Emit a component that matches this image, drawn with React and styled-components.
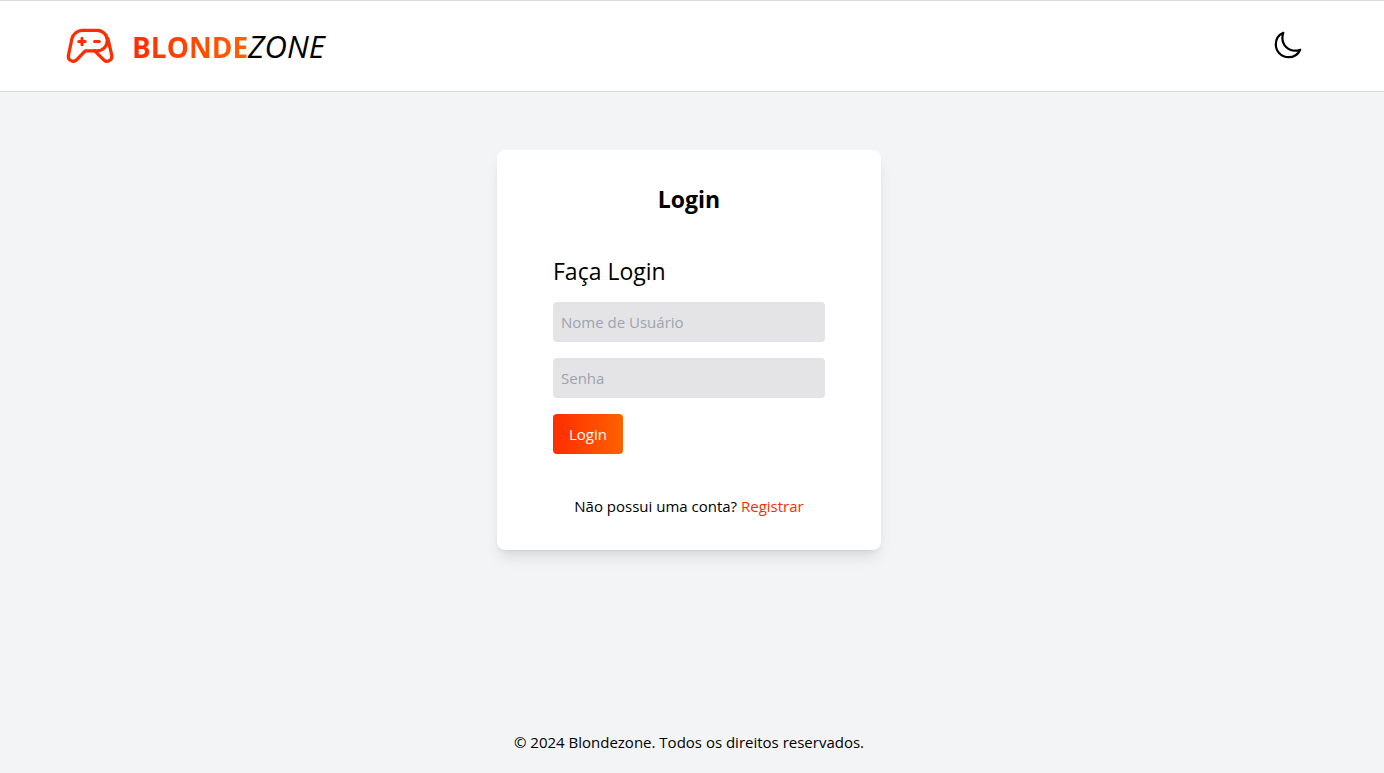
import React from "react";
import styled, { createGlobalStyle } from "styled-components";

const GlobalStyle = createGlobalStyle`
  *, *::before, *::after { box-sizing: border-box; }
  body {
    margin: 0;
    background: #f3f4f6;
    color: #000;
    font-family: "Segoe UI", "Open Sans", "Noto Sans", sans-serif;
    font-size: 15px;
    line-height: 24px;
  }
  h1, h2, p { margin: 0; }
  input, button { font: inherit; border: 0; }
`;

const Page = styled.div`
  display: flex;
  flex-direction: column;
  min-height: 100vh;
`;

const Header = styled.header`
  display: flex;
  align-items: center;
  justify-content: space-between;
  padding: 19px 70px 19px 64px;
  background: #fff;
  border: solid #d9dadc;
  border-width: 1px 0;
`;

const Brand = styled.a`
  display: flex;
  align-items: center;
  gap: 16px;
  color: #000;
  font-size: 28px;
  line-height: 36px;
  text-decoration: none;
`;

const BrandName = styled.span`
  padding-top: 1px;
`;

const BrandStrong = styled.strong`
  background: linear-gradient(to right, #ff2c00, #ff6200);
  background-clip: text;
  color: transparent;
  font-weight: 700;
`;

const BrandLight = styled.em`
  font-size: 31px;
  font-weight: 400;
`;

const LineIcon = styled.svg`
  display: block;
  width: ${({ $size }) => $size}px;
  height: ${({ $size }) => $size}px;
  fill: none;
  stroke: ${({ $color }) => $color};
  stroke-linecap: round;
  stroke-linejoin: round;
`;

const ThemeButton = styled.button`
  display: flex;
  padding: 8px 11px 10px;
  background: none;
  color: #000;
  cursor: pointer;
`;

const Main = styled.main`
  flex: 1;
  display: flex;
  justify-content: center;
  align-items: flex-start;
  padding: 58px 22px 58px 16px;
`;

const Card = styled.section`
  display: flex;
  flex-direction: column;
  gap: 32px;
  width: 100%;
  max-width: 384px;
  padding: 32px;
  background: #fff;
  border-radius: 8px;
  box-shadow: 0 10px 15px -3px rgba(0, 0, 0, 0.1), 0 4px 6px -4px rgba(0, 0, 0, 0.1);
`;

const Title = styled.h1`
  font-size: 23px;
  font-weight: 700;
  line-height: 34px;
  text-align: center;
`;

const Form = styled.form`
  display: flex;
  flex-direction: column;
  align-items: flex-start;
  gap: 16px;
  padding: 8px 24px;
`;

const FormTitle = styled.h2`
  font-size: 23px;
  font-weight: 400;
  line-height: 30px;
`;

const Field = styled.input`
  width: 100%;
  height: 40px;
  padding: 8px;
  border-radius: 4px;
  background: #e4e4e6;
  color: #000;

  &::placeholder { color: #9ca3af; opacity: 1; }
`;

const Submit = styled.button`
  height: 40px;
  padding: 8px 16px;
  border-radius: 4px;
  background: linear-gradient(to right, #ff2c00, #ff6200);
  color: #fff;
  cursor: pointer;
`;

const Hint = styled.p`
  text-align: center;
`;

const RegisterLink = styled.a`
  color: #ff2c00;
  text-decoration: none;
`;

const Footer = styled.footer`
  padding: 15px 22px 19px 16px;
  text-align: center;
`;

function GamepadIcon() {
  return (
    <LineIcon $size={52} $color="#ff2c00" viewBox="0 0 24 24" strokeWidth="1.5" aria-hidden="true">
      <path d="M12 4.8h3.3a4.7 4.7 0 0 1 0 9.4H9.8l-3.9 4.1a2.25 2.25 0 0 1-3.85-2l1.6-7.65a5 5 0 0 1 4.9-3.85z" />
      <path d="M14.2 14.2l4 4.1a2.25 2.25 0 0 0 3.85-2l-1.75-7.6" />
      <path d="M8.3 8.4v3M6.8 9.9h3M14.1 9.9h2.2" strokeWidth="1.4" />
    </LineIcon>
  );
}

function MoonIcon() {
  return (
    <LineIcon $size={30} $color="currentColor" viewBox="0 0 512 512" strokeWidth="38" aria-hidden="true">
      <path d="M160 136c0-30.62 4.51-61.61 16-88C99.57 81.27 48 159.32 48 248c0 119.29 96.71 216 216 216 88.68 0 166.73-51.57 200-128-26.39 11.49-57.38 16-88 16-119.29 0-216-96.71-216-216z" />
    </LineIcon>
  );
}

export default function App() {
  return (
    <Page>
      <GlobalStyle />
      <Header>
        <Brand href="#">
          <GamepadIcon />
          <BrandName>
            <BrandStrong>BLONDE</BrandStrong>
            <BrandLight>ZONE</BrandLight>
          </BrandName>
        </Brand>
        <ThemeButton type="button" aria-label="Alternar tema">
          <MoonIcon />
        </ThemeButton>
      </Header>
      <Main>
        <Card>
          <Title>Login</Title>
          <Form onSubmit={(event) => event.preventDefault()}>
            <FormTitle>Faça Login</FormTitle>
            <Field type="text" placeholder="Nome de Usuário" aria-label="Nome de Usuário" autoComplete="username" />
            <Field type="password" placeholder="Senha" aria-label="Senha" autoComplete="current-password" />
            <Submit type="submit">Login</Submit>
          </Form>
          <Hint>
            Não possui uma conta? <RegisterLink href="#registrar">Registrar</RegisterLink>
          </Hint>
        </Card>
      </Main>
      <Footer>© 2024 Blondezone. Todos os direitos reservados.</Footer>
    </Page>
  );
}
